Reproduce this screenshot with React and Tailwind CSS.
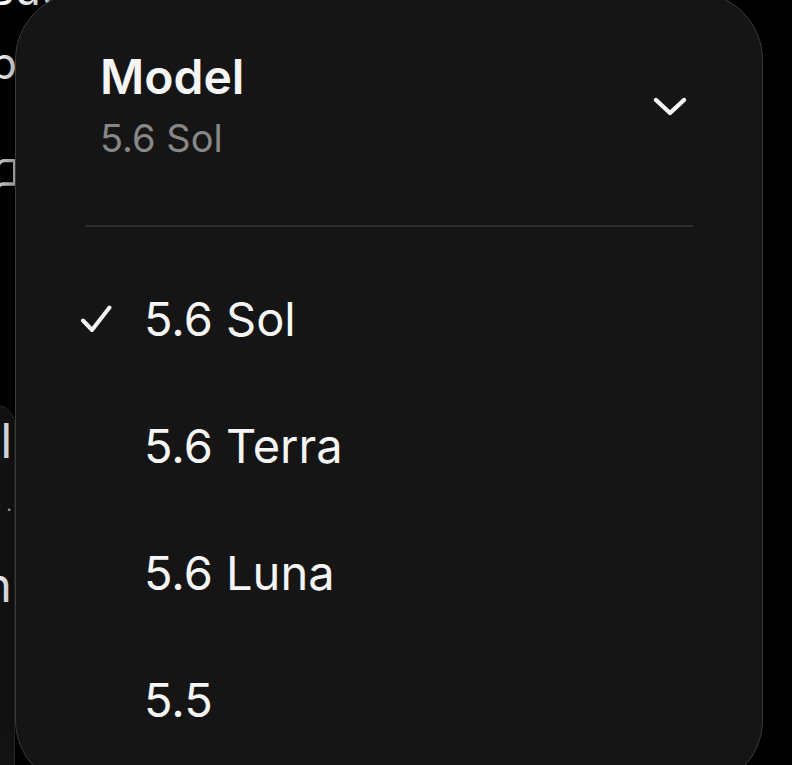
import React from "react";

const models = ["5.6 Sol", "5.6 Terra", "5.6 Luna", "5.5"];

const Check = () => (
  <svg width="32" height="32" viewBox="0 0 32 32" fill="none" className="shrink-0">
    <path d="M3 17.5 L12 27 L29.5 4.5" stroke="#f5f5f5" strokeWidth="4" strokeLinecap="round" strokeLinejoin="round" />
  </svg>
);

const Chevron = () => (
  <svg width="36" height="22" viewBox="0 0 36 22" fill="none">
    <path d="M4 4 L18 17 L32 4" stroke="#f5f5f5" strokeWidth="4.4" strokeLinecap="round" strokeLinejoin="round" />
  </svg>
);

const App = () => {
  const selected = "5.6 Sol";

  return (
    <div
      className="relative w-[792px] h-[765px] bg-black overflow-hidden text-white"
      style={{ fontFamily: "Inter, 'Noto Sans', sans-serif" }}
    >
      {/* page content behind the menu */}
      <div className="flex flex-col">
        <div className="-mt-[37px] -ml-[14px] text-[44px] leading-[52px]">But c</div>
        <div className="mt-[22px] -ml-[10px] text-[44px] leading-[52px]">pa</div>
        <div className="mt-[63px] -ml-[22px] h-[44px] flex items-center">
          <svg width="40" height="40" viewBox="0 0 24 24" fill="none" stroke="#d4d4d4" strokeWidth="2" strokeLinecap="round" strokeLinejoin="round">
            <path d="M2 4h6a4 4 0 0 1 4 4v13a3 3 0 0 0-3-3H2z" />
            <path d="M22 4h-6a4 4 0 0 0-4 4v13a3 3 0 0 1 3-3h7z" />
          </svg>
        </div>
        <div className="mt-[209px] -ml-[300px] w-[315px] h-[400px] bg-[#151515] border border-[#2e2e2e] rounded-[18px] flex flex-col items-end pr-[2px]">
          <div className="mt-[6px] text-[48px] leading-[58px]">Sel</div>
          <div className="mt-[24px] text-[20px] leading-[20px] text-[#bdbdbd]">.</div>
          <div className="mt-[42px] text-[48px] leading-[58px]">Wh</div>
        </div>
      </div>

      {/* model menu */}
      <div className="absolute left-[15px] top-[-8px] w-[748px] h-[796px] rounded-[68px] bg-[#151515] border border-[#3a3a3a] shadow-[0_0_30px_rgba(0,0,0,0.6)]">
        <div className="flex items-center justify-between pt-[55px] pl-[84px] pr-[74px]">
          <div className="flex flex-col">
            <div className="text-[48px] leading-[58px] font-semibold text-[#f5f5f5]">Model</div>
            <div className="mt-[10px] text-[38px] leading-[44px] text-[#878787]">{selected}</div>
          </div>
          <div className="mt-[6px]">
            <Chevron />
          </div>
        </div>

        <div className="mt-[65px] mx-[69px] h-[2px] bg-[#2b2b2b]" />

        <div className="mt-[28px] flex flex-col">
          {models.map((m) => (
            <div key={m} className="h-[127px] flex items-center pl-[64px] gap-[32px]">
              {m === selected ? <Check /> : <div className="w-[32px] shrink-0" />}
              <span className="text-[47px] leading-[56px] text-[#f5f5f5]">{m}</span>
            </div>
          ))}
        </div>
      </div>
    </div>
  );
};

export default App;
